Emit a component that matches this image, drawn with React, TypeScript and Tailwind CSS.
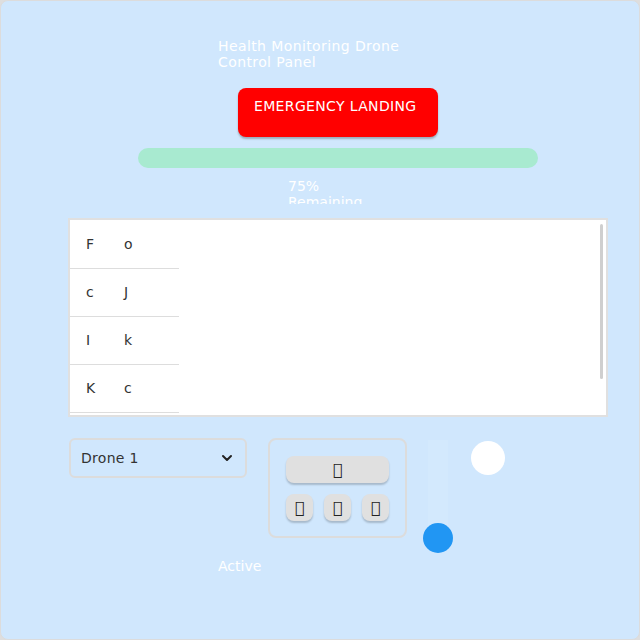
import React from "react";
import { ChevronDown } from "lucide-react";

const rows = [
  ["F", "o"],
  ["c", "J"],
  ["I", "k"],
  ["K", "c"],
  ["a", "m"],
];

const btn = "rounded-lg bg-[#e0e0e0] text-[#222] text-[16px] leading-none shadow-[0_2px_2px_rgba(0,0,0,0.2)] flex items-center justify-center";

export default function App() {
  return (
    <div className="w-[640px] h-[640px] bg-[#dedede]" style={{ fontFamily: '"DejaVu Sans", sans-serif' }}>
      <div className="w-[640px] h-[640px] rounded-lg border border-[#dcdcdc] bg-[#d0e7fd] flex flex-col items-start pt-[37px]">
        <div className="ml-[217px] w-[204px] text-[14px] leading-4 tracking-[0.4px] text-white">Health Monitoring Drone Control Panel</div>
        <button className="ml-[237px] mt-[18px] w-[200px] h-[49px] rounded-lg bg-[#ff0000] text-white text-[14px] leading-4 tracking-[0.35px] pt-[10px] pl-[16px] flex justify-start items-start shadow-[0_2px_2px_rgba(0,0,0,0.25)]">
          EMERGENCY LANDING
        </button>
        <div className="ml-[137px] mt-[11px] w-[400px] h-[20px] rounded-full bg-[#a8ead0]" />
        <div className="ml-[287px] mt-[10px] w-[90px] h-[26px] overflow-hidden text-[14px] leading-4 text-white">75% Remaining</div>
        <div className="relative ml-[67px] mt-[14px] w-[540px] h-[199px] border-2 border-[#e0e0e0] bg-white overflow-hidden">
          <div className="w-[109px] pt-[1px]">
            {rows.map((r, i) => (
              <div key={i} className="h-[48px] border-b border-[#dddddd] flex items-center text-[14px] text-[#333]">
                <span className="w-[54px] pl-[16px]">{r[0]}</span>
                <span>{r[1]}</span>
              </div>
            ))}
          </div>
          <div className="absolute right-[3px] top-[4px] w-[3px] h-[155px] rounded-full bg-[#cfcfcf]" />
        </div>
        <div className="ml-[68px] mt-[21px] flex items-start gap-[21px]">
          <div className="w-[178px] h-[40px] rounded-md border-2 border-[#dcdcdc] flex items-center justify-between pl-[10px] pr-[10px] text-[14px] tracking-[0.3px] text-[#333]">
            <span>Drone 1</span>
            <ChevronDown size={16} strokeWidth={3} color="#222" />
          </div>
          <div className="w-[139px] h-[100px] rounded-lg border-2 border-[#dcdcdc] px-[16px] pt-[16px] flex flex-col gap-[11px]">
            <button className={`w-[103px] h-[27px] ${btn}`}>{"\uE000"}</button>
            <div className="flex gap-[11px]">
              <button className={`w-[27px] h-[27px] ${btn}`}>{"\uE001"}</button>
              <button className={`w-[27px] h-[27px] ${btn}`}>{"\uE002"}</button>
              <button className={`w-[27px] h-[27px] ${btn}`}>{"\uE003"}</button>
            </div>
          </div>
          <div className="relative mt-[2px] w-[20px] h-[100px] bg-[#d3e9fd]">
            <div className="absolute left-[-5px] top-[83px] w-[30px] h-[30px] rounded-full bg-[#2196f3]" />
          </div>
          <div className="mt-[3px] ml-[2px] w-[34px] h-[34px] rounded-full bg-white" />
        </div>
        <div className="ml-[217px] mt-[18px] w-[204px] text-[14px] leading-4 text-white">Active</div>
      </div>
    </div>
  );
}
